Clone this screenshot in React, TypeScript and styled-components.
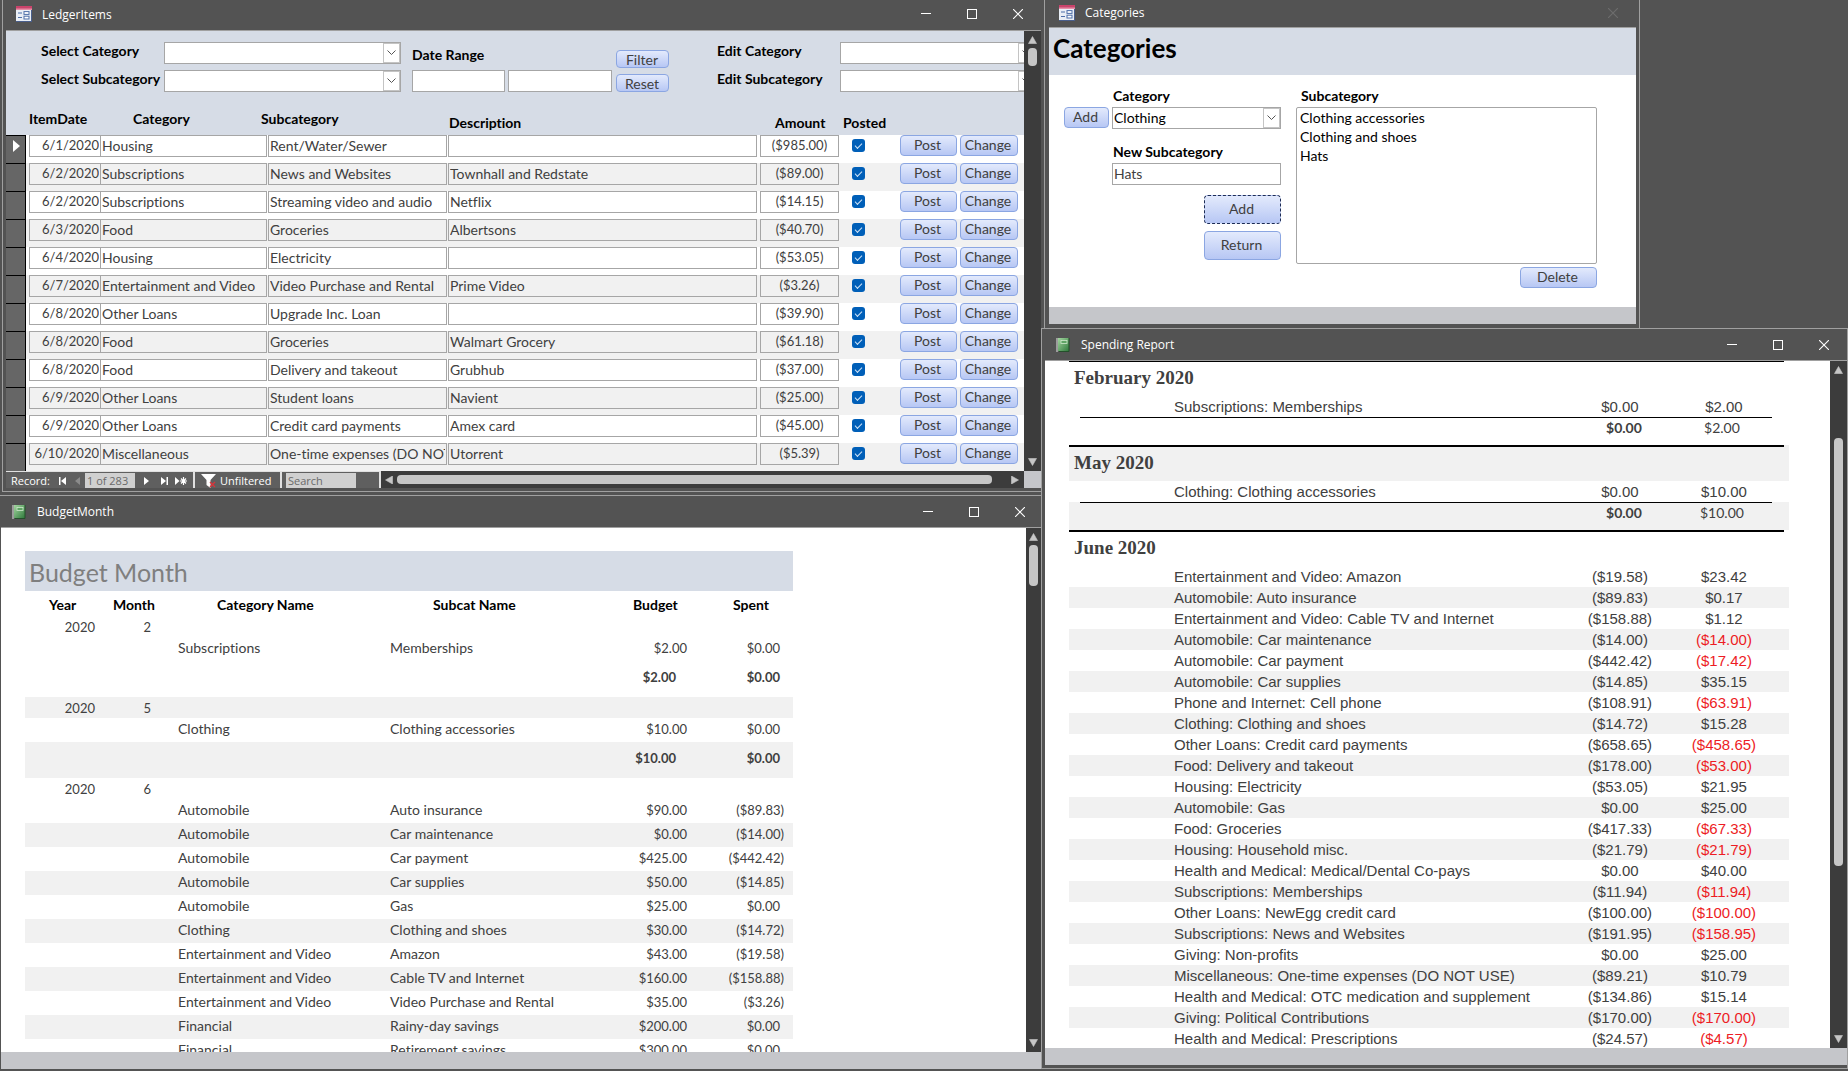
import React from "react";
import styled, { createGlobalStyle, css } from "styled-components";

const color = {
  frame: "#535353",
  line: "#a0a0a0",
  header: "#d6dce6",
  band: "#f1f1f1",
  text: "#404040",
  field: "#a6a6a6",
  footer: "#c5c6ca",
  track: "#3c3c3c",
  thumb: "#c6c6c6",
};

const formFont = 'Lato, "Open Sans", sans-serif';

const GlobalStyle = createGlobalStyle`
  *, *::before, *::after { box-sizing: border-box; }
  body { margin: 0; background: ${color.frame}; font-family: ${formFont}; font-size: 14px; color: ${color.text}; font-variant-ligatures: none; }
  input, select, button { font: inherit; font-variant-ligatures: none; color: inherit; margin: 0; }
  table { border-collapse: collapse; table-layout: fixed; }
  td, th { padding: 0; font-weight: 400; text-align: left; }
`;

/* ---------- desktop and windows ---------- */

const Desktop = styled.main`
  position: relative;
  height: 100vh;
  overflow: hidden;
  background: ${color.frame};
`;

const WindowFrame = styled.section`
  position: absolute;
  display: flex;
  flex-direction: column;
  background: ${color.frame};
  border: 1px solid ${color.line};
`;

const LedgerWindow = styled(WindowFrame)`
  left: 2px;
  top: 0;
  width: 1043px;
  height: 492px;
  padding: 0 3px 3px;
  border-top: 0;
`;

const BudgetWindow = styled(WindowFrame)`
  left: 0;
  top: 495px;
  bottom: 2px;
  width: 1042px;
  padding-left: 1px;
  border-left: 0;
  border-bottom: 0;
`;

const CategoriesWindow = styled(WindowFrame)`
  left: 1044px;
  top: 0;
  width: 596px;
  padding: 0 3px 4px 4px;
  border-top: 0;
  border-bottom: 0;
`;

const SpendingWindow = styled(WindowFrame)`
  left: 1041px;
  right: 0;
  top: 328px;
  bottom: 2px;
  padding: 0 0 3px 3px;
`;

const TitleBar = styled.header<{ $height: number; $pad: number; $lift?: boolean }>`
  flex: none;
  display: flex;
  align-items: center;
  height: ${(p) => p.$height}px;
  padding-left: ${(p) => p.$pad}px;
  padding-bottom: ${(p) => (p.$lift ? 2 : 0)}px;
  border-bottom: 1px solid ${color.line};
  color: #fff;
  font-family: "Open Sans", "Noto Sans", sans-serif;
  font-size: 12px;
`;

const Title = styled.h2`
  flex: 1;
  margin: 0;
  font-size: 12px;
  font-weight: 400;
`;

const WinButton = styled.button`
  width: 46px;
  height: 24px;
  padding: 0;
  border: 0;
  background: none;
  display: grid;
  place-items: center;
  &:disabled { color: #6d6d6d; }
`;

const WinButtons = styled.div<{ $right?: number }>`
  display: flex;
  color: #fff;
  margin-right: ${(p) => p.$right ?? 0}px;
`;

const FormIcon = styled.svg`
  width: 16px;
  height: 16px;
  margin-right: 10px;
`;

const ReportIcon = styled.svg`
  width: 14px;
  height: 14px;
  margin-right: 11px;
`;

function FormGlyph() {
  return (
    <FormIcon viewBox="0 0 16 16" aria-hidden="true">
      <rect x="0" y="0" width="16" height="16" fill="#e9eef6" />
      <rect x="0" y="0" width="16" height="4" fill="#c9436b" />
      <rect x="0" y="2.5" width="16" height="1.5" fill="#e58fa8" />
      <rect x="0" y="15" width="16" height="1" fill="#4a5f8c" />
      <rect x="15" y="4" width="1" height="12" fill="#4a5f8c" />
      <path d="M2 7h4M2 11.500h4" stroke="#4d6ea8" strokeWidth="1.200" />
      <rect x="8" y="5.600" width="5" height="2.800" fill="#fff" stroke="#4d6ea8" />
      <rect x="8" y="10.200" width="5" height="2.800" fill="#fff" stroke="#4d6ea8" />
    </FormIcon>
  );
}

function ReportGlyph() {
  return (
    <ReportIcon viewBox="0 0 14 14" aria-hidden="true">
      <defs>
        <linearGradient id="cover" x1="0" y1="0" x2="1" y2="1">
          <stop offset="0" stopColor="#a4d6a0" />
          <stop offset="1" stopColor="#2f7a3c" />
        </linearGradient>
      </defs>
      <rect x="2" y="0" width="11" height="13" fill="url(#cover)" />
      <path d="M13 0v13.500H3" fill="none" stroke="#24502b" />
      <path d="M1 .5v13" stroke="#e6e6e6" strokeWidth="2" strokeDasharray="1 1" />
      <rect x="5" y="2.500" width="6" height="3" fill="#5fa565" stroke="#cfe8cc" strokeWidth=".8" />
    </ReportIcon>
  );
}

function WindowControls({ right }: { right?: number }) {
  return (
    <WinButtons $right={right}>
      <WinButton aria-label="Minimize">
        <svg width="10" height="10" stroke="currentColor"><path d="M0 4.500h10" /></svg>
      </WinButton>
      <WinButton aria-label="Maximize">
        <svg width="10" height="10" stroke="currentColor" fill="none"><rect x=".5" y=".5" width="9" height="9" /></svg>
      </WinButton>
      <WinButton aria-label="Close"><CloseGlyph /></WinButton>
    </WinButtons>
  );
}

function CloseGlyph() {
  return (
    <svg width="10" height="10" stroke="currentColor" strokeWidth="1.100"><path d="M0 0l10 10M10 0L0 10" /></svg>
  );
}

const Split = styled.div`
  flex: 1;
  min-height: 0;
  display: flex;
`;

const Viewport = styled.div<{ $bg?: string }>`
  flex: 1;
  min-width: 0;
  overflow: hidden;
  background: ${(p) => p.$bg ?? "#fff"};
`;

const WindowFooter = styled.div`
  flex: none;
  height: 17px;
  background: ${color.footer};
`;

/* ---------- scroll bars ---------- */

const VTrack = styled.div<{ $width?: number }>`
  flex: none;
  display: flex;
  flex-direction: column;
  align-items: center;
  width: ${(p) => p.$width ?? 17}px;
  padding: 5px 0;
  background: ${color.track};
`;

const VThumb = styled.div<{ $before: number; $size: number }>`
  width: 9px;
  height: ${(p) => p.$size}px;
  margin: ${(p) => p.$before}px 0 auto;
  border-radius: 4px;
  background: ${color.thumb};
`;

const HTrack = styled.div`
  flex: 1;
  display: flex;
  align-items: center;
  padding: 0 4px;
  background: ${color.track};
`;

const HThumb = styled.div`
  flex: 1;
  height: 9px;
  margin: 0 19px 0 3px;
  border-radius: 4px;
  background: ${color.thumb};
`;

function Arrow({ dir }: { dir: "up" | "down" | "left" | "right" }) {
  const d = {
    up: "M4.500 .5L8.500 7.500H.5z",
    down: "M4.500 7.500L8.500 .5H.5z",
    left: "M.5 4L7.500 0V8z",
    right: "M7.500 4L.5 0V8z",
  }[dir];
  return (
    <svg width="9" height="8" fill={color.thumb} stroke={color.thumb} strokeWidth=".6" strokeLinejoin="round">
      <path d={d} />
    </svg>
  );
}

function VScroll({ before, size, width }: { before: number; size: number; width?: number }) {
  return (
    <VTrack $width={width}>
      <Arrow dir="up" />
      <VThumb $before={before} $size={size} />
      <Arrow dir="down" />
    </VTrack>
  );
}

/* ---------- shared form parts ---------- */

const FieldLabel = styled.label`
  display: block;
  height: 20px;
  line-height: 18px;
  font-weight: 700;
  color: #000;
  white-space: nowrap;
`;

const fieldBox = css`
  height: 22px;
  border: 1px solid ${color.field};
  background: #fff;
`;

const TextField = styled.input<{ $width: number }>`
  ${fieldBox}
  width: ${(p) => p.$width}px;
  padding: 0 1px 2px;
`;

const ComboBox = styled.span<{ $width: number }>`
  ${fieldBox}
  display: flex;
  width: ${(p) => p.$width}px;
`;

const ComboSelect = styled.select`
  flex: 1;
  min-width: 0;
  padding: 0 1px 2px;
  border: 0;
  background: none;
  color: #000;
  appearance: none;
`;

const ComboArrow = styled.span`
  width: 17px;
  border: 1px solid #c4c4c4;
  display: grid;
  place-items: center;
  background: #fff;
`;

function Combo({ id, width, value }: { id: string; width: number; value?: string }) {
  return (
    <ComboBox $width={width}>
      <ComboSelect id={id} defaultValue={value ?? ""}>
        <option>{value ?? ""}</option>
      </ComboSelect>
      <ComboArrow aria-hidden="true">
        <svg width="9" height="6" fill="none" stroke="#555"><path d="M.5 .5l4 4 4-4" /></svg>
      </ComboArrow>
    </ComboBox>
  );
}

const PushButton = styled.button<{ $width: number; $height: number; $focused?: boolean; $low?: boolean }>`
  width: ${(p) => p.$width}px;
  height: ${(p) => p.$height}px;
  padding: ${(p) => (p.$low ? "1px 1px 0 0" : "0 2px 1px 0")};
  line-height: 16px;
  border: 1px ${(p) => (p.$focused ? "dashed #1d2c55" : "solid #8ba6e2")};
  border-radius: 4px;
  background: linear-gradient(#e3eafc, #b7c7f4);
`;

/* ---------- ledger ---------- */

const FilterPanel = styled.form`
  display: flex;
  width: 100%;
  height: 71px;
  padding: 11px 0 0 35px;
  overflow: hidden;
`;

const PairGrid = styled.div`
  flex: none;
  display: grid;
  grid-template-columns: 123px 237px;
  grid-auto-rows: 22px;
  row-gap: 6px;
`;

const DateRange = styled.div`
  flex: none;
  margin: 4px 4px 0 11px;
`;

const DateInputs = styled.div`
  display: flex;
  gap: 3px;
  margin-top: 4px;
`;

const FilterButtons = styled.div`
  flex: none;
  display: flex;
  flex-direction: column;
  gap: 6px;
  margin: 8px 48px 0 0;
`;

const LedgerTable = styled.table`
  width: 100%;
`;

const LedgerHead = styled.th<{ $left: number; $low?: boolean }>`
  height: 33px;
  text-indent: ${(p) => p.$left}px;
  padding-top: ${(p) => (p.$low ? 11 : 7)}px;
  vertical-align: top;
  line-height: 20px;
  font-weight: 700;
  color: #000;
  background: ${color.header};
`;

const LedgerRow = styled.tr<{ $band: boolean }>`
  height: 28px;
  background: ${(p) => (p.$band ? color.band : "#fff")};
  td { vertical-align: top; }
`;

const Selector = styled.td`
  height: 28px;
  padding: 2px 0 0 7px;
  border-top: 1px solid #000;
  border-right: 1px solid #000;
  background: #666;
`;

const LedgerCell = styled.td<{ $left?: number; $right?: number }>`
  padding: 0 ${(p) => p.$right ?? 0}px 0 ${(p) => p.$left ?? 0}px;
`;

const LedgerField = styled.input<{ $align?: "right" | "center"; $joined?: boolean }>`
  ${fieldBox}
  display: block;
  width: 100%;
  padding: 0 1px 2px;
  background: transparent;
  text-align: ${(p) => p.$align ?? "left"};
  font-size: ${(p) => (p.$align ? 13 : 14)}px;
  ${(p) => p.$joined && "border-left: 0;"}
`;

const PostedBox = styled.input`
  appearance: none;
  display: grid;
  place-items: center;
  width: 13px;
  height: 13px;
  margin: 4px 0 0;
  border-radius: 3px;
  background: #005fb8;
  &::after {
    content: "";
    width: 7px;
    height: 4px;
    margin-top: -2px;
    border: solid #cfe3f6;
    border-width: 0 0 1px 1px;
    transform: rotate(-45deg);
  }
`;

const Actions = styled.div`
  display: flex;
  gap: 3px;
`;

const ledger: [string, string, string, string, string][] = [
  ["6/1/2020", "Housing", "Rent/Water/Sewer", "", "($985.00)"],
  ["6/2/2020", "Subscriptions", "News and Websites", "Townhall and Redstate", "($89.00)"],
  ["6/2/2020", "Subscriptions", "Streaming video and audio", "Netflix", "($14.15)"],
  ["6/3/2020", "Food", "Groceries", "Albertsons", "($40.70)"],
  ["6/4/2020", "Housing", "Electricity", "", "($53.05)"],
  ["6/7/2020", "Entertainment and Video", "Video Purchase and Rental", "Prime Video", "($3.26)"],
  ["6/8/2020", "Other Loans", "Upgrade Inc. Loan", "", "($39.90)"],
  ["6/8/2020", "Food", "Groceries", "Walmart Grocery", "($61.18)"],
  ["6/8/2020", "Food", "Delivery and takeout", "Grubhub", "($37.00)"],
  ["6/9/2020", "Other Loans", "Student loans", "Navient", "($25.00)"],
  ["6/9/2020", "Other Loans", "Credit card payments", "Amex card", "($45.00)"],
  ["6/10/2020", "Miscellaneous", "One-time expenses (DO NOT USE)", "Utorrent", "($5.39)"],
];

const RecordBar = styled.nav`
  flex: none;
  display: flex;
  height: 17px;
  color: #fff;
  background: #5f5f5f;
  font-family: "Open Sans", "Noto Sans", sans-serif;
  font-size: 11px;
  line-height: 17px;
`;

const RecordGroup = styled.div<{ $width: number; $left: number }>`
  flex: none;
  display: flex;
  align-items: center;
  width: ${(p) => p.$width}px;
  padding: 1px 0 0 ${(p) => p.$left}px;
  border-top: 1px solid #e0e0e0;
  border-right: 2px solid #e0e0e0;
`;

const RecordLabel = styled.label`
  width: 44px;
`;

const RecordInput = styled.input<{ $width: number }>`
  width: ${(p) => p.$width}px;
  height: 15px;
  padding: 0 2px;
  border: 0;
  background: #d0d0d0;
  color: #6a6a6a;
  &::placeholder { color: #6a6a6a; opacity: 1; }
`;

const NavButton = styled.button<{ $width: number }>`
  width: ${(p) => p.$width}px;
  height: 15px;
  padding: 0;
  border: 0;
  background: none;
  display: grid;
  place-items: center;
  &:disabled { color: #8b8b8b; }
`;

const FilterToggle = styled.button`
  display: flex;
  align-items: center;
  gap: 3px;
  height: 16px;
  padding: 0;
  border: 0;
  background: none;
`;

const Corner = styled.div`
  width: 17px;
  background: ${color.footer};
`;

function Ledger() {
  return (
    <LedgerWindow aria-label="LedgerItems">
      <TitleBar $height={31} $pad={10} $lift>
        <FormGlyph />
        <Title>LedgerItems</Title>
        <WindowControls />
      </TitleBar>
      <Split>
        <Viewport $bg={color.header}>
          <FilterPanel>
            <PairGrid>
              <FieldLabel htmlFor="select-category">Select Category</FieldLabel>
              <Combo id="select-category" width={237} />
              <FieldLabel htmlFor="select-subcategory">Select Subcategory</FieldLabel>
              <Combo id="select-subcategory" width={237} />
            </PairGrid>
            <DateRange>
              <FieldLabel htmlFor="date-from">Date Range</FieldLabel>
              <DateInputs>
                <TextField id="date-from" $width={93} />
                <TextField $width={104} aria-label="Date to" />
              </DateInputs>
            </DateRange>
            <FilterButtons>
              <PushButton type="button" $width={53} $height={18} $low>Filter</PushButton>
              <PushButton type="button" $width={53} $height={18} $low>Reset</PushButton>
            </FilterButtons>
            <PairGrid>
              <FieldLabel htmlFor="edit-category">Edit Category</FieldLabel>
              <Combo id="edit-category" width={196} />
              <FieldLabel htmlFor="edit-subcategory">Edit Subcategory</FieldLabel>
              <Combo id="edit-subcategory" width={196} />
            </PairGrid>
          </FilterPanel>
          <LedgerTable>
            <colgroup>
              <col width={19} /><col width={76} /><col width={167} /><col width={180} />
              <col /><col width={80} /><col width={60} /><col width={124} />
            </colgroup>
            <thead>
              <tr>
                <LedgerHead $left={0} aria-label="Record" />
                <LedgerHead $left={4}>ItemDate</LedgerHead>
                <LedgerHead $left={32}>Category</LedgerHead>
                <LedgerHead $left={-7}>Subcategory</LedgerHead>
                <LedgerHead $left={1} $low>Description</LedgerHead>
                <LedgerHead $left={15} $low>Amount</LedgerHead>
                <LedgerHead $left={3} $low>Posted</LedgerHead>
                <LedgerHead $left={0} aria-label="Actions" />
              </tr>
            </thead>
            <tbody>
              {ledger.map(([date, cat, sub, desc, amount], i) => (
                <LedgerRow key={i} $band={i % 2 === 1}>
                  <Selector>
                    {i === 0 && <svg width="7" height="12" fill="#fff"><path d="M0 0l7 6-7 6z" /></svg>}
                  </Selector>
                  <LedgerCell $left={3}><LedgerField readOnly aria-label="ItemDate" $align="right" value={date} /></LedgerCell>
                  <LedgerCell $right={1}><LedgerField readOnly aria-label="Category" $joined value={cat} /></LedgerCell>
                  <LedgerCell $right={1}><LedgerField readOnly aria-label="Subcategory" value={sub} /></LedgerCell>
                  <LedgerCell $right={3}><LedgerField readOnly aria-label="Description" value={desc} /></LedgerCell>
                  <LedgerCell $right={1}><LedgerField readOnly aria-label="Amount" $align="center" value={amount} /></LedgerCell>
                  <LedgerCell $left={12}><PostedBox type="checkbox" defaultChecked aria-label="Posted" /></LedgerCell>
                  <LedgerCell>
                    <Actions>
                      <PushButton $width={57} $height={21}>Post</PushButton>
                      <PushButton $width={58} $height={21}>Change</PushButton>
                    </Actions>
                  </LedgerCell>
                </LedgerRow>
              ))}
            </tbody>
          </LedgerTable>
        </Viewport>
        <VScroll before={4} size={18} />
      </Split>
      <RecordBar>
        <RecordGroup $width={189} $left={5}>
          <RecordLabel htmlFor="record">Record:</RecordLabel>
          <NavButton $width={14} aria-label="First record">
            <svg width="7" height="8" fill="currentColor"><path d="M0 0h1.500v8H0zM7 0v8L2 4z" /></svg>
          </NavButton>
          <NavButton $width={16} disabled aria-label="Previous record">
            <svg width="5" height="8" fill="currentColor"><path d="M5 0v8L0 4z" /></svg>
          </NavButton>
          <RecordInput id="record" $width={50} defaultValue="1 of 283" />
          <NavButton $width={22} aria-label="Next record">
            <svg width="5" height="8" fill="currentColor"><path d="M0 0v8l5-4z" /></svg>
          </NavButton>
          <NavButton $width={14} aria-label="Last record">
            <svg width="7" height="8" fill="currentColor"><path d="M0 0v8l5-4zM5.500 0H7v8H5.500z" /></svg>
          </NavButton>
          <NavButton $width={20} aria-label="New record">
            <svg width="12" height="8" fill="currentColor" stroke="currentColor" strokeWidth="1.200">
              <path d="M0 0v8l4.500-4z" stroke="none" /><path d="M8.500 0v8M5 4h7M6 1.500l5 5M11 1.500l-5 5" />
            </svg>
          </NavButton>
        </RecordGroup>
        <RecordGroup $width={87} $left={6}>
          <FilterToggle>
            <svg width="16" height="15"><path d="M0 1h15l-5.500 6v8l-4-3V7z" fill="#fff" /><path d="M9 9l5 5M14 9l-5 5" stroke="#d8343a" strokeWidth="1.400" /></svg>
            Unfiltered
          </FilterToggle>
        </RecordGroup>
        <RecordGroup $width={99} $left={4}>
          <RecordInput $width={70} placeholder="Search" aria-label="Search" />
        </RecordGroup>
        <HTrack>
          <Arrow dir="left" />
          <HThumb />
          <Arrow dir="right" />
        </HTrack>
        <Corner />
      </RecordBar>
    </LedgerWindow>
  );
}

/* ---------- budget report ---------- */

const BudgetSheet = styled.table`
  width: 768px;
  margin: 23px 0 0 24px;
`;

const BudgetCaption = styled.caption`
  height: 40px;
  padding-left: 4px;
  text-align: left;
  font-size: 25px;
  line-height: 42px;
  color: #7f7f7f;
  background: ${color.header};
`;

const BudgetHead = styled.th<{ $left: number }>`
  height: 25px;
  padding-left: ${(p) => p.$left}px;
  padding-top: 2px;
  line-height: 20px;
  font-weight: 700;
  color: #000;
`;

const BudgetRow = styled.tr<{ $height: number; $band?: boolean; $total?: boolean }>`
  height: ${(p) => p.$height}px;
  background: ${(p) => (p.$band ? color.band : "#fff")};
  line-height: 20px;
  td {
    vertical-align: top;
    padding-top: ${(p) => (p.$total ? 6 : 1)}px;
    font-weight: ${(p) => (p.$total ? 700 : 400)};
  }
`;

const BudgetCell = styled.td<{ $left?: number; $right?: number; $end?: boolean }>`
  padding-left: ${(p) => p.$left ?? 0}px;
  padding-right: ${(p) => p.$right ?? 0}px;
  text-align: ${(p) => (p.$end ? "right" : "left")};
  font-size: ${(p) => (p.$end ? 13 : 14)}px;
  white-space: nowrap;
`;

type BudgetLine = [string, string, string, string];
const budget: { month: string; lines: BudgetLine[]; total?: [string, string] }[] = [
  { month: "2", lines: [["Subscriptions", "Memberships", "$2.00", "$0.00"]], total: ["$2.00", "$0.00"] },
  { month: "5", lines: [["Clothing", "Clothing accessories", "$10.00", "$0.00"]], total: ["$10.00", "$0.00"] },
  {
    month: "6",
    lines: [
      ["Automobile", "Auto insurance", "$90.00", "($89.83)"],
      ["Automobile", "Car maintenance", "$0.00", "($14.00)"],
      ["Automobile", "Car payment", "$425.00", "($442.42)"],
      ["Automobile", "Car supplies", "$50.00", "($14.85)"],
      ["Automobile", "Gas", "$25.00", "$0.00"],
      ["Clothing", "Clothing and shoes", "$30.00", "($14.72)"],
      ["Entertainment and Video", "Amazon", "$43.00", "($19.58)"],
      ["Entertainment and Video", "Cable TV and Internet", "$160.00", "($158.88)"],
      ["Entertainment and Video", "Video Purchase and Rental", "$35.00", "($3.26)"],
      ["Financial", "Rainy-day savings", "$200.00", "$0.00"],
      ["Financial", "Retirement savings", "$300.00", "$0.00"],
    ],
  },
];

const endPad = (amount: string) => (amount.endsWith(")") ? 9 : 13);

function Budget() {
  return (
    <BudgetWindow aria-label="BudgetMonth">
      <TitleBar $height={32} $pad={11}>
        <ReportGlyph />
        <Title>BudgetMonth</Title>
        <WindowControls right={-2} />
      </TitleBar>
      <Split>
        <Viewport>
          <BudgetSheet>
            <BudgetCaption>Budget Month</BudgetCaption>
            <colgroup>
              <col width={70} /><col width={56} /><col width={239} /><col width={210} /><col width={87} /><col width={106} />
            </colgroup>
            <thead>
              <tr>
                <BudgetHead $left={24}>Year</BudgetHead>
                <BudgetHead $left={18}>Month</BudgetHead>
                <BudgetHead $left={66}>Category Name</BudgetHead>
                <BudgetHead $left={43}>Subcat Name</BudgetHead>
                <BudgetHead $left={33}>Budget</BudgetHead>
                <BudgetHead $left={46}>Spent</BudgetHead>
              </tr>
            </thead>
            <tbody>
              {budget.map((group) => (
                <React.Fragment key={group.month}>
                  <BudgetRow $height={21} $band={group.month === "5"}>
                    <BudgetCell $end>2020</BudgetCell>
                    <BudgetCell $end>{group.month}</BudgetCell>
                    <BudgetCell colSpan={4} />
                  </BudgetRow>
                  {group.lines.map(([cat, sub, planned, spent], i) => (
                    <BudgetRow key={i} $height={24} $band={i % 2 === 1}>
                      <BudgetCell colSpan={2} />
                      <BudgetCell $left={27}>{cat}</BudgetCell>
                      <BudgetCell>{sub}</BudgetCell>
                      <BudgetCell $end>{planned}</BudgetCell>
                      <BudgetCell $end $right={endPad(spent)}>{spent}</BudgetCell>
                    </BudgetRow>
                  ))}
                  {group.total && (
                    <BudgetRow $height={36} $total $band={group.month === "5"}>
                      <BudgetCell colSpan={4} />
                      <BudgetCell $end $right={11}>{group.total[0]}</BudgetCell>
                      <BudgetCell $end $right={13}>{group.total[1]}</BudgetCell>
                    </BudgetRow>
                  )}
                </React.Fragment>
              ))}
            </tbody>
          </BudgetSheet>
        </Viewport>
        <VScroll before={4} size={41} width={15} />
      </Split>
      <WindowFooter />
    </BudgetWindow>
  );
}

/* ---------- categories form ---------- */

const CategoryHeader = styled.h1`
  height: 47px;
  margin: 0;
  padding-left: 4px;
  font-size: 26px;
  line-height: 41px;
  color: #000;
  background: ${color.header};
`;

const CategoryForm = styled.form`
  display: flex;
  height: 232px;
  padding: 12px 0 0 15px;
  background: #fff;
`;

const AddColumn = styled.div`
  padding-top: 20px;
  margin-right: 3px;
`;

const EntryColumn = styled.div`
  display: flex;
  flex-direction: column;
  width: 169px;
`;

const EntryActions = styled.div`
  display: flex;
  flex-direction: column;
  align-items: flex-end;
  gap: 7px;
  margin-top: 10px;
`;

const SpacedLabel = styled(FieldLabel)`
  padding-left: 1px;
  &:not(:first-child) { margin-top: 14px; }
`;

const ListColumn = styled.div`
  display: flex;
  flex-direction: column;
  align-items: flex-end;
  gap: 3px;
  width: 301px;
  margin-left: 15px;
`;

const ListLabel = styled(FieldLabel)`
  align-self: flex-start;
  padding-left: 5px;
  margin-bottom: -3px;
`;

const ListBox = styled.select`
  width: 100%;
  height: 157px;
  padding: 1px;
  border: 1px solid ${color.field};
  background: #fff;
  color: #000;
  overflow: hidden;
  option { height: 19px; padding: 0 2px; line-height: 19px; min-height: 19px; }
`;

function Categories() {
  return (
    <CategoriesWindow aria-label="Categories">
      <TitleBar $height={28} $pad={10} $lift>
        <FormGlyph />
        <Title>Categories</Title>
        <WinButtons><WinButton disabled aria-label="Close"><CloseGlyph /></WinButton></WinButtons>
      </TitleBar>
      <CategoryHeader>Categories</CategoryHeader>
      <CategoryForm>
        <AddColumn>
          <PushButton type="button" $width={45} $height={21}>Add</PushButton>
        </AddColumn>
        <EntryColumn>
          <SpacedLabel htmlFor="category">Category</SpacedLabel>
          <Combo id="category" width={169} value="Clothing" />
          <SpacedLabel htmlFor="new-subcategory">New Subcategory</SpacedLabel>
          <TextField id="new-subcategory" $width={169} defaultValue="Hats" />
          <EntryActions>
            <PushButton type="button" $width={77} $height={29} $focused>Add</PushButton>
            <PushButton type="button" $width={77} $height={29}>Return</PushButton>
          </EntryActions>
        </EntryColumn>
        <ListColumn>
          <ListLabel htmlFor="subcategory">Subcategory</ListLabel>
          <ListBox id="subcategory" size={8}>
            <option>Clothing accessories</option>
            <option>Clothing and shoes</option>
            <option>Hats</option>
          </ListBox>
          <PushButton type="button" $width={77} $height={21}>Delete</PushButton>
        </ListColumn>
      </CategoryForm>
      <WindowFooter />
    </CategoriesWindow>
  );
}

/* ---------- spending report ---------- */

const SpendingSheet = styled.table`
  width: calc(100% - 65px);
  margin-left: 24px;
  font-family: "Liberation Sans", Arial, sans-serif;
  font-size: 15px;
`;

const MonthHead = styled.th<{ $band: boolean; $first: boolean }>`
  height: ${(p) => (p.$first ? 35 : 36)}px;
  padding-left: 5px;
  padding-bottom: ${(p) => (p.$first ? 2 : 0)}px;
  font-family: "Liberation Serif", "Times New Roman", serif;
  font-size: 19px;
  line-height: 22px;
  font-weight: 700;
  background:
    linear-gradient(#000, #000) 0 0 / calc(100% - 5px) ${(p) => (p.$first ? 1 : 2)}px no-repeat,
    ${(p) => (p.$band ? color.band : "#fff")};
`;

const SpendingRow = styled.tr<{ $band?: boolean }>`
  height: 21px;
  line-height: 21px;
  background: ${(p) => (p.$band ? color.band : "#fff")};
`;

const SpendingTotal = styled.tr<{ $band?: boolean }>`
  height: 28px;
  font-family: ${formFont};
  font-size: 14px;
  line-height: 20px;
  background:
    linear-gradient(#000, #000) 11px 0 / calc(100% - 28px) 1px no-repeat,
    ${(p) => (p.$band ? color.band : "#fff")};
  td { vertical-align: top; padding-top: 1px; }
`;

const ItemCell = styled.td`
  padding-left: 105px;
  white-space: nowrap;
`;

const Money = styled.td<{ $over?: boolean; $bold?: boolean; $shift?: "left" | "right" }>`
  text-align: center;
  color: ${(p) => (p.$over ? "#ed1c24" : color.text)};
  font-weight: ${(p) => (p.$bold ? 700 : 400)};
  padding-left: ${(p) => (p.$shift === "right" ? 8 : 0)}px;
  padding-right: ${(p) => (p.$shift === "left" ? 4 : 0)}px;
`;

type SpendLine = [string, string, string];
const spending: { month: string; band: boolean; lines: SpendLine[]; total?: [string, string] }[] = [
  { month: "February 2020", band: false, lines: [["Subscriptions: Memberships", "$0.00", "$2.00"]], total: ["$0.00", "$2.00"] },
  { month: "May 2020", band: true, lines: [["Clothing: Clothing accessories", "$0.00", "$10.00"]], total: ["$0.00", "$10.00"] },
  {
    month: "June 2020",
    band: false,
    lines: [
      ["Entertainment and Video: Amazon", "($19.58)", "$23.42"],
      ["Automobile: Auto insurance", "($89.83)", "$0.17"],
      ["Entertainment and Video: Cable TV and Internet", "($158.88)", "$1.12"],
      ["Automobile: Car maintenance", "($14.00)", "($14.00)"],
      ["Automobile: Car payment", "($442.42)", "($17.42)"],
      ["Automobile: Car supplies", "($14.85)", "$35.15"],
      ["Phone and Internet: Cell phone", "($108.91)", "($63.91)"],
      ["Clothing: Clothing and shoes", "($14.72)", "$15.28"],
      ["Other Loans: Credit card payments", "($658.65)", "($458.65)"],
      ["Food: Delivery and takeout", "($178.00)", "($53.00)"],
      ["Housing: Electricity", "($53.05)", "$21.95"],
      ["Automobile: Gas", "$0.00", "$25.00"],
      ["Food: Groceries", "($417.33)", "($67.33)"],
      ["Housing: Household misc.", "($21.79)", "($21.79)"],
      ["Health and Medical: Medical/Dental Co-pays", "$0.00", "$40.00"],
      ["Subscriptions: Memberships", "($11.94)", "($11.94)"],
      ["Other Loans: NewEgg credit card", "($100.00)", "($100.00)"],
      ["Subscriptions: News and Websites", "($191.95)", "($158.95)"],
      ["Giving: Non-profits", "$0.00", "$25.00"],
      ["Miscellaneous: One-time expenses (DO NOT USE)", "($89.21)", "$10.79"],
      ["Health and Medical: OTC medication and supplement", "($134.86)", "$15.14"],
      ["Giving: Political Contributions", "($170.00)", "($170.00)"],
      ["Health and Medical: Prescriptions", "($24.57)", "($4.57)"],
    ],
  },
];

function Spending() {
  return (
    <SpendingWindow aria-label="Spending Report">
      <TitleBar $height={32} $pad={11}>
        <ReportGlyph />
        <Title>Spending Report</Title>
        <WindowControls />
      </TitleBar>
      <Split>
        <Viewport>
          <SpendingSheet>
            <colgroup>
              <col /><col width={104} /><col width={104} /><col width={13} />
            </colgroup>
            {spending.map((group, g) => (
              <tbody key={group.month}>
                <tr>
                  <MonthHead colSpan={4} $band={group.band} $first={g === 0}>{group.month}</MonthHead>
                </tr>
                {group.lines.map(([item, spent, left], i) => (
                  <SpendingRow key={i} $band={i % 2 === 1}>
                    <ItemCell>{item}</ItemCell>
                    <Money>{spent}</Money>
                    <Money $over={left.startsWith("(")}>{left}</Money>
                    <td />
                  </SpendingRow>
                ))}
                {group.total && (
                  <SpendingTotal $band={group.band}>
                    <td />
                    <Money $bold $shift="right">{group.total[0]}</Money>
                    <Money $shift="left">{group.total[1]}</Money>
                    <td />
                  </SpendingTotal>
                )}
              </tbody>
            ))}
          </SpendingSheet>
        </Viewport>
        <VScroll before={64} size={428} />
      </Split>
      <WindowFooter />
    </SpendingWindow>
  );
}

export default function App() {
  return (
    <>
      <GlobalStyle />
      <Desktop>
        <Ledger />
        <Categories />
        <Budget />
        <Spending />
      </Desktop>
    </>
  );
}
